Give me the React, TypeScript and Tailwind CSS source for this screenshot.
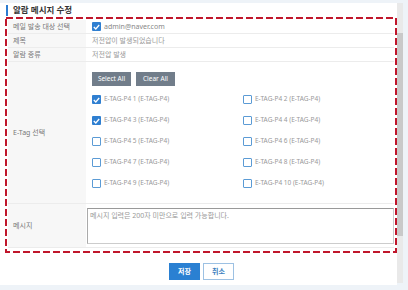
import React from "react";

const font = { fontFamily: '"Noto Sans", "Noto Sans CJK KR", sans-serif' };

function Box({ checked }: { checked?: boolean }) {
  return checked ? (
    <span className="w-[9px] h-[9px] bg-[#2f7fd1] rounded-[1px] flex items-center justify-center shrink-0">
      <svg width="7" height="6" viewBox="0 0 7 6">
        <path d="M0.8 3 L2.8 5 L6.2 1" stroke="white" strokeWidth="1.3" fill="none" />
      </svg>
    </span>
  ) : (
    <span className="w-[9px] h-[9px] bg-white border border-[#5b9bd5] rounded-[1px] shrink-0" />
  );
}

const tags = [1, 2, 3, 4, 5, 6, 7, 8, 9, 10];

export default function App() {
  return (
    <div className="w-[408px] h-[290px] bg-[#eef3f8] flex overflow-hidden" style={font}>
      <div className="w-[397px] h-[282px] mt-[3px] bg-white flex flex-col">
        <div className="h-[14px] flex items-center pl-[6px]">
          <span className="w-[2px] h-[11px] bg-[#2b7bd0]" />
          <span className="ml-[5px] text-[8.5px] leading-none font-bold text-[#333]">알람 메시지 수정</span>
        </div>
        <div className="relative ml-[5px] w-[392px] h-[236px] pt-[3px] pl-[3px]">
          <div className="w-[386px] flex flex-col text-[7px] leading-none">
            <div className="flex h-[14px] border-b border-[#ececec]">
              <div className="w-[78px] bg-[#f7f7f7] flex items-center pl-[5px] text-[#777]">메일 발송 대상 선택</div>
              <div className="flex items-center pl-[6px] text-[#888] gap-[3px]">
                <Box checked />
                <span>admin@naver.com</span>
              </div>
            </div>
            <div className="flex h-[14px] border-b border-[#ececec]">
              <div className="w-[78px] bg-[#f7f7f7] flex items-center pl-[5px] text-[#777]">제목</div>
              <div className="flex items-center pl-[6px] text-[#999]">저전압이 발생되었습니다</div>
            </div>
            <div className="flex h-[14px] border-b border-[#ececec]">
              <div className="w-[78px] bg-[#f7f7f7] flex items-center pl-[5px] text-[#777]">알람 종류</div>
              <div className="flex items-center pl-[6px] text-[#999]">저전압 발생</div>
            </div>
            <div className="flex h-[142px] border-b border-[#ececec]">
              <div className="w-[78px] bg-[#f7f7f7] flex items-center pl-[5px] text-[#777]">E-Tag 선택</div>
              <div className="flex flex-col pl-[6px] pt-[10px]">
                <div className="flex gap-[5px]">
                  <button className="w-[39px] h-[14px] bg-[#717d8a] text-white text-[6.5px] leading-none">Select All</button>
                  <button className="w-[39px] h-[14px] bg-[#717d8a] text-white text-[6.5px] leading-none">Clear All</button>
                </div>
                <div className="grid grid-cols-[151px_140px] mt-[3px] text-[6.5px]">
                  {tags.map((n) => (
                    <div key={n} className="h-[21px] flex items-center gap-[3px] text-[#999]">
                      <Box checked={n === 1 || n === 3} />
                      <span>E-TAG-P4 {n} (E-TAG-P4)</span>
                    </div>
                  ))}
                </div>
              </div>
            </div>
            <div className="flex h-[44px] border-b border-[#ececec]">
              <div className="w-[78px] bg-[#f7f7f7] flex items-center pl-[5px] text-[#777]">메시지</div>
              <div className="flex items-center pl-[1px]">
                <div className="w-[307px] h-[36px] border border-[#ccc] border-t-[#999] border-l-[#aaa] px-[2px] pt-[3px] text-[#999]">
                  메시지 입력은 200자 미만으로 입력 가능합니다.
                </div>
              </div>
            </div>
          </div>
          <svg className="absolute inset-0 pointer-events-none" width="392" height="236">
            <rect x="1" y="1" width="390" height="234" fill="none" stroke="#c0162b" strokeWidth="2" strokeDasharray="7 3" />
          </svg>
        </div>
        <div className="flex justify-center gap-[3px] mt-[10px] pl-[6px]">
          <button className="w-[31px] h-[17px] bg-[#2a80d2] text-white text-[7px] leading-none font-bold">저장</button>
          <button className="w-[31px] h-[17px] bg-white border border-[#9dc1e3] text-[#3d7fc0] text-[7px] leading-none font-bold">취소</button>
        </div>
      </div>
      <div className="w-[6px] h-[280px] mt-[3px] bg-[#e9e9e9] flex flex-col">
        <div className="h-[30px]" />
        <div className="h-[203px] bg-[#c9c9c9]" />
      </div>
    </div>
  );
}
